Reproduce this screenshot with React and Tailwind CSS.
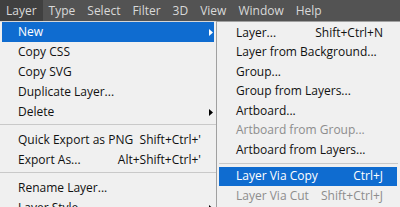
import React from 'react';

const barItems = ['Layer', 'Type', 'Select', 'Filter', '3D', 'View', 'Window', 'Help'];

const layerMenu = [
  { label: 'New', sub: true, active: true },
  { label: 'Copy CSS' },
  { label: 'Copy SVG' },
  { label: 'Duplicate Layer...' },
  { label: 'Delete', sub: true },
  { sep: true },
  { label: 'Quick Export as PNG', shortcut: "Shift+Ctrl+'" },
  { label: 'Export As...', shortcut: "Alt+Shift+Ctrl+'" },
  { sep: true },
  { label: 'Rename Layer...' },
  { label: 'Layer Style', sub: true },
];

const newMenu = [
  { label: 'Layer...', shortcut: 'Shift+Ctrl+N' },
  { label: 'Layer from Background...' },
  { label: 'Group...' },
  { label: 'Group from Layers...' },
  { label: 'Artboard...' },
  { label: 'Artboard from Group...', disabled: true },
  { label: 'Artboard from Layers...' },
  { sep: true },
  { label: 'Layer Via Copy', shortcut: 'Ctrl+J', active: true },
  { label: 'Layer Via Cut', shortcut: 'Shift+Ctrl+J', disabled: true },
];

function Arrow({ white }) {
  return (
    <svg width="4" height="7" viewBox="0 0 4 7" className={white ? 'fill-white' : 'fill-black'}>
      <path d="M0 0 L4 3.5 L0 7 Z" />
    </svg>
  );
}

function MainItem({ item }) {
  if (item.sep) return <div className="h-[8px] pt-[2px]"><div className="h-px w-full bg-[#c9c9c9]" /></div>;
  return (
    <div className={`mx-[2px] h-5 flex items-center pl-4 ${item.active ? 'bg-[#0f6cd0] text-white' : 'text-[#111]'}`}>
      <span className="flex-1 whitespace-nowrap">{item.label}</span>
      {item.shortcut && <span className="whitespace-nowrap">{item.shortcut}</span>}
      <span className="w-[13px] flex justify-end pr-[1px]">{item.sub && <Arrow white={item.active} />}</span>
    </div>
  );
}

function SubItem({ item }) {
  if (item.sep) return <div className="h-[7px] flex items-center mx-[2px]"><div className="h-px w-full bg-[#c9c9c9]" /></div>;
  const color = item.active ? 'bg-[#0f6cd0] text-white' : item.disabled ? 'text-[#8d8d8d]' : 'text-[#111]';
  return (
    <div className={`ml-[2px] mr-[3px] h-[19.5px] flex items-center pl-[17px] pr-[14px] ${color}`}>
      <span className="flex-1 whitespace-nowrap">{item.label}</span>
      {item.shortcut && <span className="whitespace-nowrap">{item.shortcut}</span>}
    </div>
  );
}

export default function App() {
  return (
    <div className="w-[400px] h-[207px] overflow-hidden bg-[#f0f0f0] text-[12px] leading-none" style={{ fontFamily: '"Open Sans", "Noto Sans", sans-serif' }}>
      <div className="h-[21px] bg-[#535353] flex items-stretch text-[#d9d9d9]">
        {barItems.map((b, i) => (
          <div key={b} className={`flex items-center px-[6px] ${i === 0 ? 'bg-[#404040]' : ''}`}>{b}</div>
        ))}
      </div>
      <div className="flex">
        <div className="w-[216px] shrink-0 border-t border-[#d6d6d6]">
          {layerMenu.map((item, i) => <MainItem key={i} item={item} />)}
        </div>
        <div className="flex-1 border-l border-t border-[#a0a0a0] pt-px">
          {newMenu.map((item, i) => <SubItem key={i} item={item} />)}
        </div>
      </div>
    </div>
  );
}
